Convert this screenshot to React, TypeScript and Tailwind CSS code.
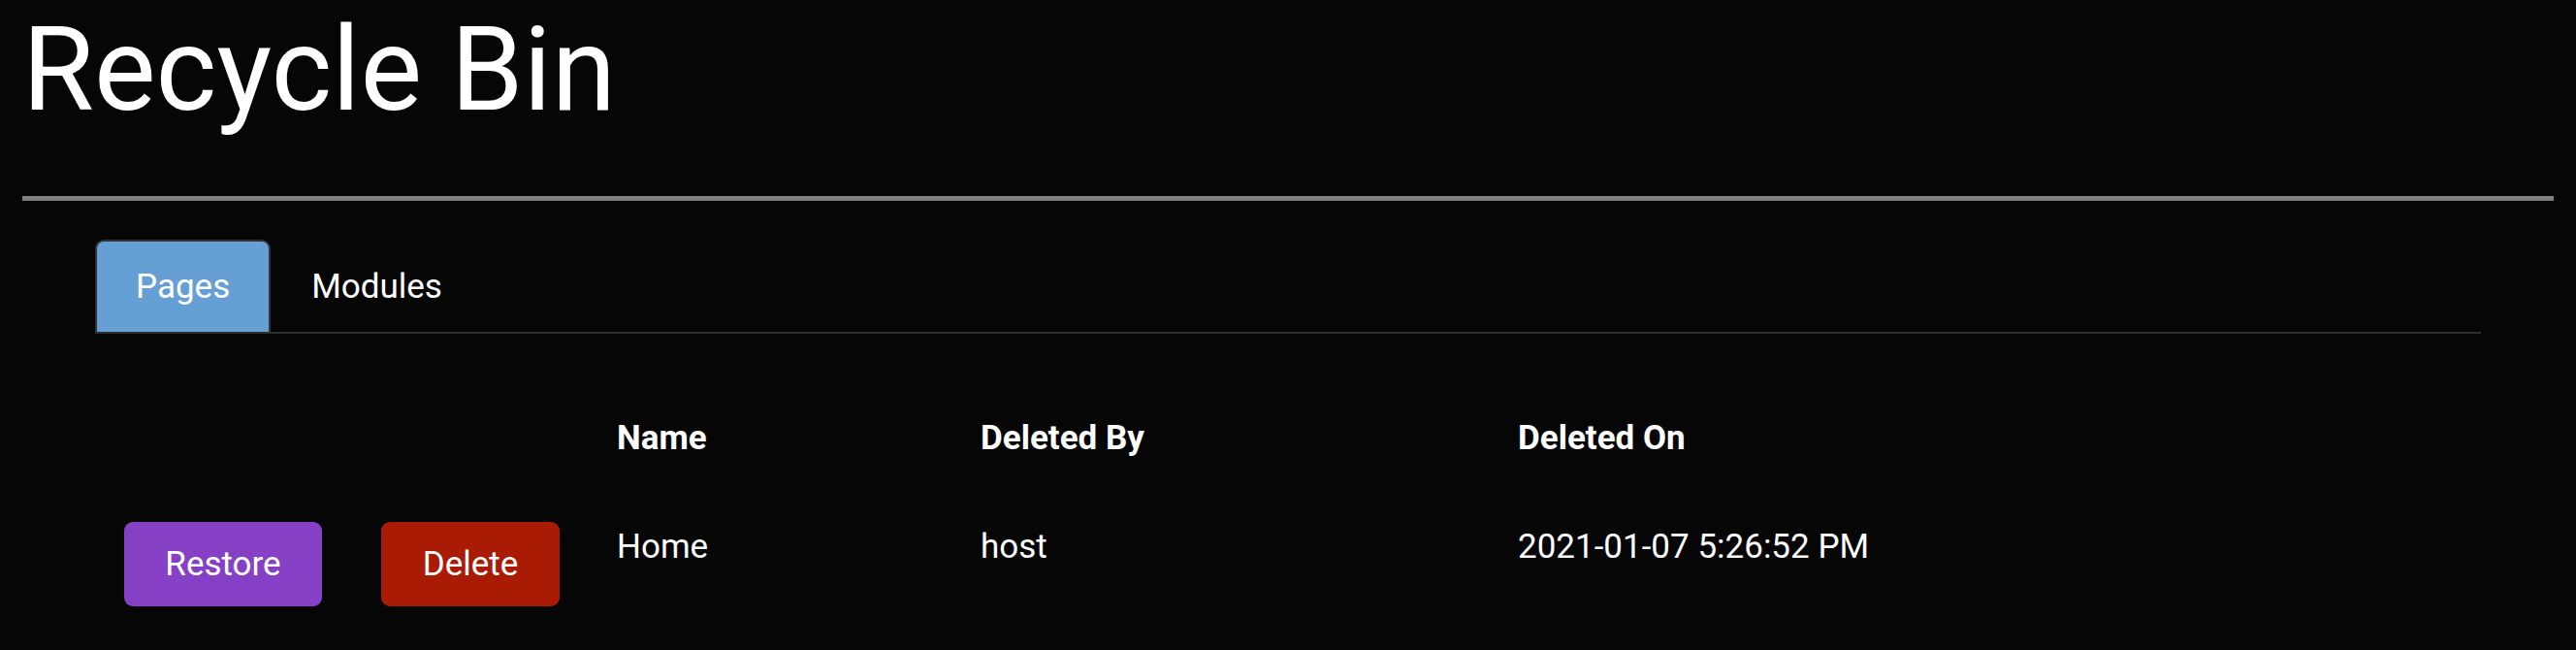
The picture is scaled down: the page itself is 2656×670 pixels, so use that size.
import React from "react";

export default function App() {
  const cell = "px-[30px]";
  return (
    <div
      className="min-h-screen w-full bg-[#060606] px-[23px] text-white"
      style={{ fontFamily: "Roboto, 'Noto Sans', Arial, sans-serif" }}
    >
      <h1 className="m-0 text-[120px] font-normal leading-[144px]">Recycle Bin</h1>
      <div className="mt-[58px] h-[5px] w-full bg-[#808080]" />

      <div className="mx-[75px] mt-[40px] flex border-b-2 border-[#2e2e2e]">
        <div className="rounded-t-[9px] border-2 border-b-0 border-[#333333] bg-[#669fd3] px-[40px] pb-[19px] pt-[20px] text-[35px] leading-[54px]">
          Pages
        </div>
        <div className="border-2 border-b-0 border-transparent px-[40px] pb-[19px] pt-[20px] text-[35px] leading-[54px]">
          Modules
        </div>
      </div>

      <div className="mx-[75px] grid grid-cols-[265px_243px_375px_554px_1fr] text-[35px] leading-[54px]">
        <div className={`${cell} mt-[81px]`} />
        <div className={`${cell} mt-[81px]`} />
        <div className={`${cell} mt-[81px] font-bold`}>Name</div>
        <div className={`${cell} mt-[81px] font-bold`}>Deleted By</div>
        <div className={`${cell} mt-[81px] font-bold`}>Deleted On</div>

        <div className={`${cell} mt-[58px]`}>
          <button className="mt-[1px] flex h-[87px] w-[204px] items-center justify-center rounded-[9px] bg-[#8540c6] pt-[1px] text-[35px] leading-[54px] text-white">
            Restore
          </button>
        </div>
        <div className={`${cell} mt-[58px]`}>
          <button className="mt-[1px] flex h-[87px] w-[184px] items-center justify-center rounded-[9px] bg-[#aa1b06] pt-[1px] text-[35px] leading-[54px] text-white">
            Delete
          </button>
        </div>
        <div className={`${cell} mt-[58px]`}>Home</div>
        <div className={`${cell} mt-[58px]`}>host</div>
        <div className={`${cell} mt-[58px]`}>2021-01-07 5:26:52 PM</div>
      </div>
    </div>
  );
}
